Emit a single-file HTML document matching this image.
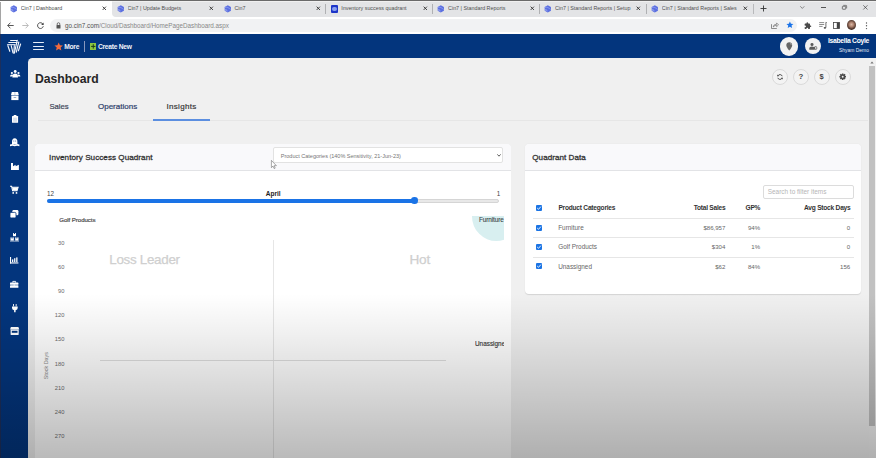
<!DOCTYPE html>
<html><head><meta charset="utf-8">
<style>
*{margin:0;padding:0;box-sizing:border-box}
html,body{width:876px;height:458px;overflow:hidden;background:#f0f0f0;font-family:"Liberation Sans",sans-serif;position:relative}
.a{position:absolute}
.t{position:absolute;white-space:nowrap;line-height:1}
svg{position:absolute;overflow:visible}
</style></head><body>

<div class="a" style="left:0;top:0;width:876px;height:17px;background:#fff"></div>
<div class="a" style="left:112px;top:1.5px;width:764px;height:15.5px;background:#e3e4e6;border-bottom-left-radius:4px"></div>
<div class="a" style="left:0;top:0;width:876px;height:1px;background:#6a6a6a"></div>
<div class="a" style="left:112px;top:1px;width:764px;height:1px;background:#f0f0f0"></div>
<svg style="left:9.899999999999999px;top:4.5px" width="7.6" height="7.6" viewBox="0 0 8 8"><path d="M4 0.2L7.3 2V6L4 7.8L0.7 6V2Z" fill="#5b6fe0"/><path d="M0.9 2.6Q3.2 1.6 5.4 3.4L6.9 4.8" stroke="#8d9cf0" stroke-width="0.9" fill="none"/><path d="M1 5.2Q2.5 4.8 3.6 6.2" stroke="#b3bdf5" stroke-width="0.9" fill="none"/></svg>
<div class="t" style="left:20.7px;top:6.2px;font-size:5.35px;color:#4a4a4a;width:78.8px;overflow:hidden">Cin7 | Dashboard</div>
<svg style="left:102.2px;top:6.2px" width="4.6" height="4.6" viewBox="0 0 5 5"><path d="M0.7 0.7L4.3 4.3M4.3 0.7L0.7 4.3" stroke="#333" stroke-width="1"/></svg>
<svg style="left:116.75px;top:4.5px" width="7.6" height="7.6" viewBox="0 0 8 8"><path d="M4 0.2L7.3 2V6L4 7.8L0.7 6V2Z" fill="#5b6fe0"/><path d="M0.9 2.6Q3.2 1.6 5.4 3.4L6.9 4.8" stroke="#8d9cf0" stroke-width="0.9" fill="none"/><path d="M1 5.2Q2.5 4.8 3.6 6.2" stroke="#b3bdf5" stroke-width="0.9" fill="none"/></svg>
<div class="t" style="left:127.55px;top:6.2px;font-size:5.35px;color:#505050;width:78.8px;overflow:hidden">Cin7 | Update Budgets</div>
<svg style="left:209.04999999999998px;top:6.2px" width="4.6" height="4.6" viewBox="0 0 5 5"><path d="M0.7 0.7L4.3 4.3M4.3 0.7L0.7 4.3" stroke="#333" stroke-width="1"/></svg>
<svg style="left:223.59999999999997px;top:4.5px" width="7.6" height="7.6" viewBox="0 0 8 8"><path d="M4 0.2L7.3 2V6L4 7.8L0.7 6V2Z" fill="#5b6fe0"/><path d="M0.9 2.6Q3.2 1.6 5.4 3.4L6.9 4.8" stroke="#8d9cf0" stroke-width="0.9" fill="none"/><path d="M1 5.2Q2.5 4.8 3.6 6.2" stroke="#b3bdf5" stroke-width="0.9" fill="none"/></svg>
<div class="t" style="left:234.39999999999998px;top:6.2px;font-size:5.35px;color:#505050;width:78.80000000000001px;overflow:hidden">Cin7</div>
<svg style="left:315.9px;top:6.2px" width="4.6" height="4.6" viewBox="0 0 5 5"><path d="M0.7 0.7L4.3 4.3M4.3 0.7L0.7 4.3" stroke="#333" stroke-width="1"/></svg>
<div class="a" style="left:325.35px;top:4px;width:0.9px;height:9.5px;background:#b0b1b3"></div>
<div class="a" style="left:330.6499999999999px;top:5px;width:7.3px;height:7.5px;background:#1d35c8;border-radius:1px"></div><div class="a" style="left:331.94999999999993px;top:6.5px;width:4.6px;height:4.6px;background:#8aa0f0;border-radius:50%"></div>
<div class="t" style="left:341.24999999999994px;top:6.2px;font-size:5.35px;color:#505050;width:78.80000000000001px;overflow:hidden">Inventory success quadrant</div>
<svg style="left:422.74999999999994px;top:6.2px" width="4.6" height="4.6" viewBox="0 0 5 5"><path d="M0.7 0.7L4.3 4.3M4.3 0.7L0.7 4.3" stroke="#333" stroke-width="1"/></svg>
<div class="a" style="left:432.19999999999993px;top:4px;width:0.9px;height:9.5px;background:#b0b1b3"></div>
<svg style="left:437.29999999999995px;top:4.5px" width="7.6" height="7.6" viewBox="0 0 8 8"><path d="M4 0.2L7.3 2V6L4 7.8L0.7 6V2Z" fill="#5b6fe0"/><path d="M0.9 2.6Q3.2 1.6 5.4 3.4L6.9 4.8" stroke="#8d9cf0" stroke-width="0.9" fill="none"/><path d="M1 5.2Q2.5 4.8 3.6 6.2" stroke="#b3bdf5" stroke-width="0.9" fill="none"/></svg>
<div class="t" style="left:448.09999999999997px;top:6.2px;font-size:5.35px;color:#505050;width:78.80000000000001px;overflow:hidden">Cin7 | Standard Reports</div>
<svg style="left:529.6px;top:6.2px" width="4.6" height="4.6" viewBox="0 0 5 5"><path d="M0.7 0.7L4.3 4.3M4.3 0.7L0.7 4.3" stroke="#333" stroke-width="1"/></svg>
<div class="a" style="left:539.05px;top:4px;width:0.9px;height:9.5px;background:#b0b1b3"></div>
<svg style="left:544.1500000000001px;top:4.5px" width="7.6" height="7.6" viewBox="0 0 8 8"><path d="M4 0.2L7.3 2V6L4 7.8L0.7 6V2Z" fill="#5b6fe0"/><path d="M0.9 2.6Q3.2 1.6 5.4 3.4L6.9 4.8" stroke="#8d9cf0" stroke-width="0.9" fill="none"/><path d="M1 5.2Q2.5 4.8 3.6 6.2" stroke="#b3bdf5" stroke-width="0.9" fill="none"/></svg>
<div class="t" style="left:554.95px;top:6.2px;font-size:5.35px;color:#505050;width:78.79999999999995px;overflow:hidden">Cin7 | Standard Reports | Setup</div>
<svg style="left:636.45px;top:6.2px" width="4.6" height="4.6" viewBox="0 0 5 5"><path d="M0.7 0.7L4.3 4.3M4.3 0.7L0.7 4.3" stroke="#333" stroke-width="1"/></svg>
<div class="a" style="left:645.9px;top:4px;width:0.9px;height:9.5px;background:#b0b1b3"></div>
<svg style="left:651.0px;top:4.5px" width="7.6" height="7.6" viewBox="0 0 8 8"><path d="M4 0.2L7.3 2V6L4 7.8L0.7 6V2Z" fill="#5b6fe0"/><path d="M0.9 2.6Q3.2 1.6 5.4 3.4L6.9 4.8" stroke="#8d9cf0" stroke-width="0.9" fill="none"/><path d="M1 5.2Q2.5 4.8 3.6 6.2" stroke="#b3bdf5" stroke-width="0.9" fill="none"/></svg>
<div class="t" style="left:661.8px;top:6.2px;font-size:5.35px;color:#505050;width:78.79999999999995px;overflow:hidden">Cin7 | Standard Reports | Sales</div>
<svg style="left:743.3px;top:6.2px" width="4.6" height="4.6" viewBox="0 0 5 5"><path d="M0.7 0.7L4.3 4.3M4.3 0.7L0.7 4.3" stroke="#333" stroke-width="1"/></svg>
<div class="a" style="left:752.7499999999999px;top:4px;width:0.9px;height:9.5px;background:#b0b1b3"></div>
<div class="a" style="left:753px;top:4px;width:1px;height:9.5px;background:#b8b9bb"></div>
<svg style="left:760px;top:5px" width="7" height="7" viewBox="0 0 7 7"><path d="M3.5 0.5V6.5M0.5 3.5H6.5" stroke="#333" stroke-width="0.9"/></svg>
<svg style="left:800px;top:6px" width="4.6" height="2.8" viewBox="0 0 5 3"><path d="M0.3 0.3L2.5 2.6L4.7 0.3" stroke="#555" stroke-width="0.7" fill="none"/></svg>
<div class="a" style="left:821.2px;top:7.1px;width:5px;height:0.6px;background:#555"></div>
<svg style="left:842.2px;top:5.4px" width="5" height="4.6" viewBox="0 0 5 4.6"><rect x="0.35" y="1.25" width="3.4" height="3" rx="0.5" stroke="#444" stroke-width="0.7" fill="none"/><path d="M1.3 0.35H4.1Q4.65 0.35 4.65 0.9V3.3" stroke="#444" stroke-width="0.6" fill="none"/></svg>
<svg style="left:863px;top:5.3px" width="4.8" height="4.8" viewBox="0 0 5 5"><path d="M0.3 0.3L4.7 4.7M4.7 0.3L0.3 4.7" stroke="#333" stroke-width="0.65"/></svg>
<div class="a" style="left:0;top:17px;width:876px;height:17px;background:#fff"></div>
<svg style="left:7px;top:22px" width="7" height="7" viewBox="0 0 7 7"><path d="M6.7 3.5H0.8M3.4 0.7L0.7 3.5L3.4 6.3" stroke="#444" stroke-width="0.9" fill="none"/></svg>
<svg style="left:22px;top:22px" width="7" height="7" viewBox="0 0 7 7"><path d="M0.3 3.5H6.2M3.6 0.7L6.3 3.5L3.6 6.3" stroke="#b5b5b5" stroke-width="0.9" fill="none"/></svg>
<svg style="left:36.5px;top:22px" width="7" height="7" viewBox="0 0 7 7"><path d="M6 2.2A2.9 2.9 0 1 0 6.3 4.2" stroke="#444" stroke-width="0.9" fill="none"/><path d="M6.6 0.4V2.9H4.1Z" fill="#444"/></svg>
<div class="a" style="left:50px;top:19px;width:747px;height:12.5px;background:#f1f2f3;border-radius:7px"></div>
<svg style="left:56px;top:21.5px" width="5" height="7" viewBox="0 0 5 7"><path d="M1.2 3V2A1.3 1.3 0 0 1 3.8 2V3" stroke="#555" stroke-width="0.8" fill="none"/><rect x="0.5" y="3" width="4" height="3.5" rx="0.5" fill="#555"/></svg>
<div class="t" style="left:65px;top:22.7px;font-size:6.3px;color:#888"><span style="color:#505050">go.cin7.com</span>/Cloud/Dashboard/HomePageDashboard.aspx</div>
<svg style="left:771px;top:22px" width="8" height="7" viewBox="0 0 8 7"><path d="M0.5 2.2V6.5H5.8" stroke="#6a6a6a" stroke-width="0.75" fill="none"/><path d="M2.2 5Q2.4 2.4 5 2.3H5.6V0.9L7.5 2.9L5.6 4.7V3.4H5Q3.6 3.5 2.2 5Z" stroke="#6a6a6a" stroke-width="0.65" fill="none" stroke-linejoin="round"/></svg>
<svg style="left:785.6px;top:21.4px" width="7.8" height="7.8" viewBox="0 0 24 24"><path d="M12 1.5l3.2 7 7.6.7-5.8 5 1.8 7.5L12 17.8 5.2 21.7 7 14.2l-5.8-5 7.6-.7z" fill="#1a73e8"/></svg>
<svg style="left:803.8px;top:21.6px" width="7.6" height="7.6" viewBox="0 0 24 24"><path d="M20.5 11H19V7c0-1.1-.9-2-2-2h-4V3.5a2.5 2.5 0 0 0-5 0V5H4c-1.1 0-2 .9-2 2v3.8h1.5a2.7 2.7 0 0 1 0 5.4H2V20c0 1.1.9 2 2 2h3.8v-1.5a2.7 2.7 0 0 1 5.4 0V22H17c1.1 0 2-.9 2-2v-4h1.5a2.5 2.5 0 0 0 0-5z" fill="#4a4a4a"/></svg>
<svg style="left:818.5px;top:22px" width="8" height="7" viewBox="0 0 8 7"><path d="M0.2 0.6H5.2M0.2 2.5H5.2M0.2 4.4H3.6" stroke="#5a5a5a" stroke-width="0.7"/><path d="M6.9 0.3V5.6" stroke="#4a4a4a" stroke-width="0.8"/><ellipse cx="5.9" cy="5.8" rx="1.2" ry="0.9" fill="#4a4a4a"/><path d="M6.9 0.3L7.8 0.6" stroke="#4a4a4a" stroke-width="0.7"/></svg>
<svg style="left:832.5px;top:21.5px" width="7" height="7" viewBox="0 0 7 7"><rect x="0.5" y="0.5" width="6" height="6" stroke="#444" stroke-width="0.8" fill="none"/><rect x="3.8" y="0.5" width="2.7" height="6" fill="#444"/></svg>
<div class="a" style="left:847px;top:20px;width:9px;height:10px;border-radius:50%;background:radial-gradient(circle at 50% 45%,#d9b9a8 0,#b08470 30%,#4a3128 65%,#2a1a14 100%)"></div>
<svg style="left:864.5px;top:21.5px" width="3" height="8" viewBox="0 0 3 8"><circle cx="1.5" cy="1" r="0.7" fill="#555"/><circle cx="1.5" cy="3.8" r="0.7" fill="#555"/><circle cx="1.5" cy="6.6" r="0.7" fill="#555"/></svg>
<div class="a" style="left:0;top:34px;width:876px;height:24px;background:#03357d"></div>
<div class="a" style="left:0;top:34px;width:28px;height:424px;background:#03357d"></div>
<div class="a" style="left:0;top:34px;width:1px;height:424px;background:#1c2f5c"></div><div class="a" style="left:0;top:2px;width:1px;height:32px;background:#a5a5a5"></div>
<div class="a" style="left:28px;top:56px;width:10px;height:10px;background:#03357d"></div>
<div class="a" style="left:28px;top:58px;width:848px;height:400px;background:#f0f0f0;border-top-left-radius:4.5px"></div>
<svg style="left:7px;top:39px" width="15" height="15" viewBox="0 0 15 15"><g stroke="#f2f5fb" stroke-width="1.15" fill="none" stroke-linecap="round"><path d="M3.6 1.5H10"/><path d="M1.8 3.5H10.2"/><path d="M0.6 5.6H8" stroke="#c9d3e8" stroke-width="1.4"/><path d="M0.9 6.7L2.8 12.3"/><path d="M4.2 6.7L6 13.9"/><path d="M7.3 6.5L6.9 14.2"/><path d="M10.2 1.4L7.4 14"/><path d="M11.8 3L9.3 13.2"/><path d="M13.6 5L11.4 11.8"/></g></svg>
<div class="a" style="left:33px;top:42.3px;width:10.5px;height:1.2px;border-radius:1px;background:#e6eefa"></div>
<div class="a" style="left:33px;top:45.5px;width:10.5px;height:1.2px;border-radius:1px;background:#e6eefa"></div>
<div class="a" style="left:33px;top:48.7px;width:10.5px;height:1.2px;border-radius:1px;background:#e6eefa"></div>
<svg style="left:53.8px;top:42.2px" width="9.4" height="9.4" viewBox="0 0 24 24"><path d="M12 1.5l3.2 7 7.6.7-5.8 5 1.8 7.5L12 17.8 5.2 21.7 7 14.2l-5.8-5 7.6-.7z" fill="#f26a3d"/></svg>
<div class="t" style="left:64.3px;top:44.3px;font-size:6.7px;letter-spacing:-0.3px;font-weight:bold;color:#f0f3fa">More</div>
<div class="a" style="left:84px;top:41px;width:1px;height:11px;background:#8797bd"></div>
<div class="a" style="left:89.7px;top:43px;width:6.5px;height:6.8px;background:#8cc63f"></div>
<svg style="left:89.7px;top:43px" width="7" height="7" viewBox="0 0 7 7"><path d="M3.25 1.2V5.6M1.1 3.4H5.4" stroke="#1d3b1a" stroke-width="1"/></svg>
<div class="t" style="left:98px;top:44.3px;font-size:6.7px;letter-spacing:-0.28px;font-weight:bold;color:#f0f3fa">Create New</div>
<div class="a" style="left:779.6px;top:37.1px;width:18.6px;height:18.6px;border-radius:50%;background:#f2f2f2"></div>
<svg style="left:785.9px;top:41.8px" width="6.5" height="8.8" viewBox="0 0 8 11"><path d="M4 0.3C1.9 0.3 0.3 1.9 0.3 4C0.3 6.5 4 10.7 4 10.7S7.7 6.5 7.7 4C7.7 1.9 6.1 0.3 4 0.3z" fill="#666"/><path d="M5.2 1.6Q6.4 2.3 6.5 3.6" stroke="#bdbdbd" stroke-width="0.9" fill="none"/></svg>
<div class="a" style="left:804.8px;top:38.2px;width:16.2px;height:16.2px;border-radius:50%;background:#f2f2f2"></div>
<svg style="left:808.6px;top:42.8px" width="8.6" height="6.8" viewBox="0 0 8.6 6.8"><circle cx="3" cy="1.5" r="1.5" fill="#5a5a5a"/><path d="M0.3 6.7V5.6Q0.3 3.5 3 3.5Q5.7 3.5 5.7 5.6V6.7Z" fill="#5a5a5a"/><circle cx="6.6" cy="4.9" r="1.75" fill="#5a5a5a"/><circle cx="6.8" cy="4.9" r="0.85" fill="#ececec"/></svg>
<div class="t" style="left:828px;top:38px;font-size:6.8px;letter-spacing:-0.31px;font-weight:bold;color:#fff">Isabella Coyle</div>
<div class="t" style="left:839px;top:48.9px;font-size:4.95px;color:#e8ecf5">Shyam Demo</div>
<svg style="left:9.6px;top:69.6px" width="10.4" height="7.4" viewBox="0 0 10.4 7.4"><g fill="#fff"><circle cx="5.2" cy="1.5" r="1.45"/><circle cx="1.9" cy="3" r="1.1"/><circle cx="8.5" cy="3" r="1.1"/><path d="M2.4 7.4Q2.2 3.6 5.2 3.6Q8.2 3.6 8 7.4Z"/><path d="M0 6.6Q0 4.4 1.9 4.4Q2.9 4.4 3.2 4.9L2.4 6.6Z"/><path d="M10.4 6.6Q10.4 4.4 8.5 4.4Q7.5 4.4 7.2 4.9L8 6.6Z"/></g></svg>
<svg style="left:11.1px;top:92.2px" width="7.8" height="8.1" viewBox="0 0 7.8 8.1"><g fill="#fff"><path d="M0.8 0H7L7.8 3H0Z"/><rect x="3.7" y="0" width="0.5" height="3" fill="#03357d" opacity="0.5"/><rect x="0.3" y="3.5" width="7.2" height="4.6"/><rect x="2.6" y="5" width="2.6" height="0.7" fill="#03357d" opacity="0.6"/></g></svg>
<svg style="left:11.9px;top:115.2px" width="6.1" height="7.8" viewBox="0 0 6.1 7.8"><g fill="#fff"><rect x="0" y="1" width="6.1" height="6.8" rx="0.5"/><rect x="1.6" y="0" width="2.9" height="1.6" rx="0.4"/><rect x="1.1" y="2.6" width="3.9" height="4.2" fill="#03357d" opacity="0.15"/></g></svg>
<svg style="left:9.7px;top:138.4px" width="9.4" height="8.3" viewBox="0 0 9.4 8.3"><g fill="#fff"><path d="M2 6.3V4Q2 0.3 4.7 0.3Q7.4 0.3 7.4 4V6.3Z"/><path d="M0 6.6Q2.3 5.6 4.7 6.6Q7.1 5.6 9.4 6.6V8.3Q7.1 7.4 4.7 8.3Q2.3 7.4 0 8.3Z"/><rect x="3.3" y="2.6" width="1" height="0.9" fill="#03357d" opacity="0.7"/><rect x="5.1" y="2.6" width="1" height="0.9" fill="#03357d" opacity="0.7"/></g></svg>
<svg style="left:10.6px;top:162.9px" width="7.9" height="6.9" viewBox="0 0 7.9 6.9"><g fill="#fff"><path d="M0 0H2V3.2L4.6 1.8V3.2L7.9 1.8V6.9H0Z"/></g></svg>
<svg style="left:9.9px;top:185.8px" width="8.4" height="8.1" viewBox="0 0 8.4 8.1"><g fill="#fff"><path d="M0 0.2H1.6L2.6 4.8H7L8.1 1.2H2" stroke="#fff" stroke-width="1.1" fill="none"/><path d="M2.2 1.4H7.8L7 4.6H2.8Z"/><circle cx="3.2" cy="6.9" r="0.9"/><circle cx="6.5" cy="6.9" r="0.9"/></g></svg>
<svg style="left:10.3px;top:209.8px" width="8.4" height="7.9" viewBox="0 0 8.4 7.9"><g fill="#fff"><rect x="2.4" y="0" width="6" height="5.2" rx="1.2"/><rect x="0" y="2.4" width="6" height="5.5" rx="1.2" stroke="#03357d" stroke-width="0.8"/></g></svg>
<svg style="left:10.3px;top:232.8px" width="9" height="8.4" viewBox="0 0 9 8.4"><g fill="#fff"><rect x="3" y="0" width="3" height="3.2"/><rect x="0.5" y="4.4" width="3.3" height="3.2"/><rect x="5.2" y="4.4" width="3.3" height="3.2"/><rect x="0" y="7.8" width="9" height="0.6"/><rect x="3.9" y="0" width="1.2" height="1" fill="#03357d"/><rect x="1.5" y="4.4" width="1.2" height="1" fill="#03357d"/><rect x="6.2" y="4.4" width="1.2" height="1" fill="#03357d"/></g></svg>
<svg style="left:10.3px;top:257.3px" width="8.4" height="6.5" viewBox="0 0 8.4 6.5"><g fill="#fff"><rect x="0" y="0" width="1.1" height="6.5"/><rect x="0" y="5.4" width="8.4" height="1.1"/><rect x="2" y="2.4" width="1.3" height="2.6"/><rect x="4.1" y="1.2" width="1.3" height="3.8"/><rect x="6.2" y="0.4" width="1.3" height="4.6"/></g></svg>
<svg style="left:10.3px;top:280.5px" width="8.4" height="6.8" viewBox="0 0 8.4 6.8"><g fill="#fff"><path d="M2.8 1.6V0.4H5.6V1.6" stroke="#fff" stroke-width="0.9" fill="none"/><rect x="0" y="1.6" width="8.4" height="2.2" rx="0.6"/><rect x="0" y="4.3" width="8.4" height="2.5" rx="0.4"/><rect x="3.6" y="3.4" width="1.2" height="1.3"/></g></svg>
<svg style="left:11.8px;top:303.5px" width="5.7" height="8.3" viewBox="0 0 5.7 8.3"><g fill="#fff"><rect x="1.1" y="0" width="0.9" height="2.4"/><rect x="3.7" y="0" width="0.9" height="2.4"/><path d="M0 2.4H5.7V4Q5.7 5.8 3.6 6.2V8.3H2.1V6.2Q0 5.8 0 4Z"/></g></svg>
<svg style="left:10px;top:326.6px" width="9.3" height="7.9" viewBox="0 0 9.3 7.9"><g fill="#fff"><path d="M0.9 0H8.4L9.3 2.6H0Z"/><rect x="0.6" y="2.6" width="8.1" height="5.3" rx="0.4"/><rect x="1.8" y="3.8" width="5.7" height="2" fill="#03357d"/></g></svg>
<div class="t" style="left:35px;top:73.1px;font-size:12.2px;font-weight:bold;color:#262626">Dashboard</div>
<div class="a" style="left:772.2px;top:68.8px;width:16px;height:16px;border-radius:50%;background:#f3f3f3;border:0.8px solid #dadada"></div>
<div class="a" style="left:793.1px;top:68.8px;width:16px;height:16px;border-radius:50%;background:#f3f3f3;border:0.8px solid #dadada"></div>
<div class="a" style="left:814px;top:68.8px;width:16px;height:16px;border-radius:50%;background:#f3f3f3;border:0.8px solid #dadada"></div>
<div class="a" style="left:835.1px;top:68.8px;width:16px;height:16px;border-radius:50%;background:#f3f3f3;border:0.8px solid #dadada"></div>
<svg style="left:777.2px;top:73.8px" width="6" height="6" viewBox="0 0 6 6"><g stroke="#444" stroke-width="0.9" fill="none"><path d="M5.2 2.2A2.3 2.3 0 0 0 0.9 1.9"/><path d="M0.8 3.8A2.3 2.3 0 0 0 5.1 4.1"/></g><path d="M0.2 0.6L0.4 2.6L2.3 2.1Z" fill="#444"/><path d="M5.8 5.4L5.6 3.4L3.7 3.9Z" fill="#444"/></svg>
<div class="t" style="left:798.5px;top:72.6px;font-size:7.8px;font-weight:bold;color:#444">?</div>
<div class="t" style="left:819.6px;top:72.8px;font-size:7.5px;font-weight:bold;color:#444">$</div>
<svg style="left:839.4px;top:73.1px" width="7.4" height="7.4" viewBox="0 0 10 10"><path fill-rule="evenodd" d="M8.21 3.88 L9.49 4.01 L9.49 5.99 L8.21 6.12 L8.06 6.48 L8.87 7.48 L7.48 8.87 L6.48 8.06 L6.12 8.21 L5.99 9.49 L4.01 9.49 L3.88 8.21 L3.52 8.06 L2.52 8.87 L1.13 7.48 L1.94 6.48 L1.79 6.12 L0.51 5.99 L0.51 4.01 L1.79 3.88 L1.94 3.52 L1.13 2.52 L2.52 1.13 L3.52 1.94 L3.88 1.79 L4.01 0.51 L5.99 0.51 L6.12 1.79 L6.48 1.94 L7.48 1.13 L8.87 2.52 L8.06 3.52Z M6.3 5 A1.3 1.3 0 1 0 3.7 5 A1.3 1.3 0 1 0 6.3 5Z" fill="#4a4a4a"/></svg>
<div class="t" style="left:49.4px;top:102.5px;font-size:7.7px;color:#3d4458;-webkit-text-stroke:0.2px #3d4458">Sales</div>
<div class="t" style="left:98px;top:102.5px;font-size:8.0px;color:#2e3f6c;-webkit-text-stroke:0.2px #2e3f6c">Operations</div>
<div class="t" style="left:166.5px;top:102.8px;font-size:8px;letter-spacing:0.3px;color:#383838;-webkit-text-stroke:0.2px #383838">Insights</div>
<div class="a" style="left:38px;top:120px;width:830px;height:1px;background:#e6e6e6"></div>
<div class="a" style="left:152.6px;top:119px;width:57.8px;height:2px;background:#5b8ee0"></div>
<div class="a" style="left:35px;top:143.5px;width:476px;height:330px;background:#fff;border-radius:4px;box-shadow:0 0 0.5px rgba(0,0,0,0.15)"></div>
<div class="a" style="left:35px;top:143.5px;width:476px;height:27px;background:#f9f9fb;border-bottom:1px solid #e2e3e6;border-radius:4px 4px 0 0"></div>
<div class="t" style="left:49.1px;top:154.3px;font-size:8.1px;letter-spacing:0.05px;color:#333;-webkit-text-stroke:0.3px #333">Inventory Success Quadrant</div>
<div class="a" style="left:273.4px;top:147px;width:230.1px;height:16px;background:#fff;border:0.8px solid #e2e2e2;border-radius:2px"></div>
<div class="t" style="left:280.8px;top:153.6px;font-size:5.5px;color:#757575">Product Categories (140% Sensitivity, 21-Jun-23)</div>
<svg style="left:497px;top:154px" width="4" height="3" viewBox="0 0 4 3"><path d="M0.4 0.4L2 2.2L3.6 0.4" stroke="#333" stroke-width="0.8" fill="none"/></svg>
<svg style="left:271px;top:160px" width="6" height="9" viewBox="0 0 6 9"><path d="M0.4 0.4V7.6L2 6.1L3.2 8.6L4.2 8.1L3 5.7H5.4Z" fill="#fff" stroke="#555" stroke-width="0.5"/></svg>
<div class="t" style="left:46.9px;top:190.7px;font-size:6.3px;color:#444">12</div>
<div class="t" style="left:265.8px;top:190.7px;font-size:6.5px;font-weight:bold;color:#222">April</div>
<div class="t" style="left:496.8px;top:190.7px;font-size:6.3px;color:#444">1</div>
<div class="a" style="left:47px;top:199.4px;width:452px;height:3.2px;background:#e8e8e8;border:0.5px solid #d5d5d5;border-radius:2px"></div>
<div class="a" style="left:46.8px;top:199.2px;width:368px;height:3.6px;background:#1a73e6;border-radius:2px"></div>
<div class="a" style="left:411px;top:197px;width:6.6px;height:6.6px;background:#1a73e6;border-radius:50%"></div>
<div class="a" style="left:471.5px;top:216px;width:32.5px;height:25px;overflow:hidden"><div class="a" style="left:0;top:-24.5px;width:49px;height:49px;border-radius:50%;background:#d8eff0"></div></div>
<div class="t" style="left:479px;top:217.4px;font-size:6.4px;letter-spacing:-0.1px;color:#3a4646;-webkit-text-stroke:0.1px #3a4646">Furniture</div>
<div class="t" style="left:59.2px;top:217.3px;font-size:6.1px;letter-spacing:-0.05px;color:#444;-webkit-text-stroke:0.2px #555">Golf Products</div>
<div class="t" style="left:109.3px;top:253px;font-size:13.4px;letter-spacing:-0.3px;color:#cfcfcf;-webkit-text-stroke:0.25px #cfcfcf">Loss Leader</div>
<div class="t" style="left:409.5px;top:253px;font-size:13.6px;letter-spacing:-0.2px;color:#cfcfcf;-webkit-text-stroke:0.25px #cfcfcf">Hot</div>
<div class="a" style="left:273.2px;top:240px;width:0.9px;height:230px;background:#e6e6e6"></div>
<div class="a" style="left:100px;top:360px;width:346px;height:0.9px;background:#dedede"></div>
<div class="a" style="left:475px;top:340px;width:29px;height:9px;overflow:hidden"><div class="t" style="left:0;top:1.3px;font-size:6.4px;color:#3a3a3a;-webkit-text-stroke:0.15px #3a3a3a">Unassigned</div></div>
<div class="t" style="right:811.6px;top:241.0px;font-size:5.75px;color:#6a6a6a">30</div>
<div class="t" style="right:811.6px;top:265.1px;font-size:5.75px;color:#6a6a6a">60</div>
<div class="t" style="right:811.6px;top:289.2px;font-size:5.75px;color:#6a6a6a">90</div>
<div class="t" style="right:811.6px;top:313.3px;font-size:5.75px;color:#6a6a6a">120</div>
<div class="t" style="right:811.6px;top:337.40000000000003px;font-size:5.75px;color:#6a6a6a">150</div>
<div class="t" style="right:811.6px;top:361.5px;font-size:5.75px;color:#6a6a6a">180</div>
<div class="t" style="right:811.6px;top:385.6px;font-size:5.75px;color:#6a6a6a">210</div>
<div class="t" style="right:811.6px;top:409.7px;font-size:5.75px;color:#6a6a6a">240</div>
<div class="t" style="right:811.6px;top:433.8px;font-size:5.75px;color:#6a6a6a">270</div>
<div class="t" style="right:811.6px;top:457.90000000000003px;font-size:5.75px;color:#6a6a6a">300</div>
<div class="t" style="left:33.2px;top:363px;font-size:5.4px;color:#888;transform:rotate(-90deg);transform-origin:50% 50%;width:28px;text-align:center">Stock Days</div>
<div class="a" style="left:525px;top:143.5px;width:336px;height:150px;background:#fff;border-radius:4px;box-shadow:0 0.5px 1px rgba(0,0,0,0.12)"></div>
<div class="a" style="left:525px;top:143.5px;width:336px;height:27px;background:#f9f9fb;border-bottom:1px solid #e2e3e6;border-radius:4px 4px 0 0"></div>
<div class="t" style="left:532.3px;top:154.3px;font-size:8.05px;letter-spacing:0.06px;color:#333;-webkit-text-stroke:0.3px #333">Quadrant Data</div>
<div class="a" style="left:763.2px;top:184.8px;width:90.4px;height:13.8px;background:#fff;border:0.8px solid #dcdcdc;border-radius:2px"></div>
<div class="t" style="left:767.7px;top:188.8px;font-size:6.45px;color:#b5b5b5">Search to filter items</div>
<div class="a" style="left:536px;top:204.8px;width:6px;height:6px;background:#1b74e4;border-radius:1px"></div><svg style="left:536px;top:204.8px" width="6" height="6" viewBox="0 0 6 6"><path d="M1.2 3L2.5 4.3L4.9 1.6" stroke="#fff" stroke-width="0.9" fill="none"/></svg>
<div class="t" style="left:558.4px;top:204.9px;font-size:6.6px;letter-spacing:-0.22px;font-weight:bold;color:#333">Product Categories</div>
<div class="t" style="right:150.6px;top:204.9px;font-size:6.6px;letter-spacing:-0.24px;font-weight:bold;color:#333">Total Sales</div>
<div class="t" style="right:115.9px;top:204.9px;font-size:6.6px;letter-spacing:-0.3px;font-weight:bold;color:#333">GP%</div>
<div class="t" style="right:25.5px;top:204.9px;font-size:6.6px;letter-spacing:-0.22px;font-weight:bold;color:#333">Avg Stock Days</div>
<div class="a" style="left:533px;top:218.3px;width:321px;height:0.9px;background:#e6e6e6"></div>
<div class="a" style="left:533px;top:237.4px;width:321px;height:0.9px;background:#e6e6e6"></div>
<div class="a" style="left:533px;top:256.8px;width:321px;height:0.9px;background:#e6e6e6"></div>
<div class="a" style="left:536px;top:225px;width:6px;height:6px;background:#1b74e4;border-radius:1px"></div><svg style="left:536px;top:225px" width="6" height="6" viewBox="0 0 6 6"><path d="M1.2 3L2.5 4.3L4.9 1.6" stroke="#fff" stroke-width="0.9" fill="none"/></svg>
<div class="t" style="left:558.2px;top:225.4px;font-size:6.4px;color:#666">Furniture</div>
<div class="t" style="right:150.6px;top:225.4px;font-size:6.1px;color:#666">$86,957</div>
<div class="t" style="right:115.9px;top:225.4px;font-size:6.1px;color:#666">94%</div>
<div class="t" style="right:25.8px;top:225.4px;font-size:6.1px;color:#666">0</div>
<div class="a" style="left:536px;top:244px;width:6px;height:6px;background:#1b74e4;border-radius:1px"></div><svg style="left:536px;top:244px" width="6" height="6" viewBox="0 0 6 6"><path d="M1.2 3L2.5 4.3L4.9 1.6" stroke="#fff" stroke-width="0.9" fill="none"/></svg>
<div class="t" style="left:558.2px;top:244.4px;font-size:6.4px;color:#666">Golf Products</div>
<div class="t" style="right:150.6px;top:244.4px;font-size:6.1px;color:#666">$304</div>
<div class="t" style="right:115.9px;top:244.4px;font-size:6.1px;color:#666">1%</div>
<div class="t" style="right:25.8px;top:244.4px;font-size:6.1px;color:#666">0</div>
<div class="a" style="left:536px;top:263.4px;width:6px;height:6px;background:#1b74e4;border-radius:1px"></div><svg style="left:536px;top:263.4px" width="6" height="6" viewBox="0 0 6 6"><path d="M1.2 3L2.5 4.3L4.9 1.6" stroke="#fff" stroke-width="0.9" fill="none"/></svg>
<div class="t" style="left:558.2px;top:263.79999999999995px;font-size:6.4px;color:#666">Unassigned</div>
<div class="t" style="right:150.6px;top:263.79999999999995px;font-size:6.1px;color:#666">$62</div>
<div class="t" style="right:115.9px;top:263.79999999999995px;font-size:6.1px;color:#666">84%</div>
<div class="t" style="right:25.8px;top:263.79999999999995px;font-size:6.1px;color:#666">156</div>
<div class="a" style="left:868.5px;top:58px;width:7.5px;height:400px;background:#f1f1f1"></div>
<svg style="left:870px;top:61px" width="4" height="3" viewBox="0 0 4 3"><path d="M0.3 2.6L2 0.5L3.7 2.6Z" fill="#777"/></svg>
<div class="a" style="left:869.3px;top:66px;width:5.8px;height:359.6px;background:#c1c1c1"></div>
<!-- OVERLAY -->
<div class="a" style="left:0;top:294px;width:876px;height:164px;background:linear-gradient(to bottom,rgba(0,0,0,0),rgba(0,0,0,0.06) 24%,rgba(0,0,0,0.27))"></div>
</body></html>
